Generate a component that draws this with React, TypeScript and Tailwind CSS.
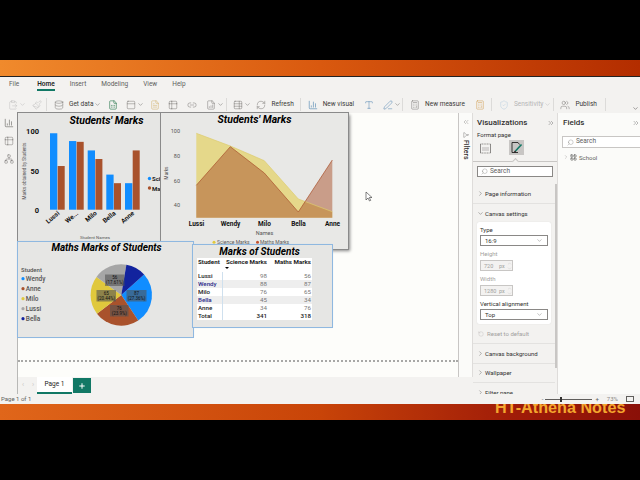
import * as React from "react";
import {
  BarChart3,
  Calculator,
  ChevronDown,
  ChevronRight,
  ChevronsLeft,
  ChevronsRight,
  ChevronUp,
  ClipboardPaste,
  Database,
  FileBarChart,
  FileSpreadsheet,
  FileText,
  Filter,
  LayoutGrid,
  Link2,
  Network,
  Paintbrush,
  PanelTop,
  PenLine,
  Plus,
  RefreshCw,
  RotateCcw,
  Search,
  ShieldCheck,
  Table2,
  TableProperties,
  Type,
  Users,
} from "lucide-react";

const sci = "#118dff";
const math = "#a9522c";

const barData = [
  { x: 50, s: 98, m: 56 },
  { x: 69, s: 88, m: 87 },
  { x: 87.7, s: 76, m: 65 },
  { x: 106.3, s: 45, m: 34 },
  { x: 125, s: 34, m: 76 },
];

const pieSlices = [
  { v: 87, c: "#118dff" },
  { v: 76, c: "#a9522c" },
  { v: 65, c: "#e0c83c" },
  { v: 56, c: "#a6a6a6" },
  { v: 34, c: "#12239e" },
];

const pieLegend = [
  { name: "Wendy", c: "#118dff" },
  { name: "Anne", c: "#a9522c" },
  { name: "Milo", c: "#e0c83c" },
  { name: "Lussi", c: "#a6a6a6" },
  { name: "Bella", c: "#12239e" },
];

const rows = [
  ["Lussi", "98", "56"],
  ["Wendy", "88", "87"],
  ["Milo", "76", "65"],
  ["Bella", "45", "34"],
  ["Anne", "34", "76"],
];

function piePaths() {
  const cx = 121.3;
  const cy = 295;
  const r = 30.7;
  let a = 48;
  return pieSlices.map((s) => {
    const sweep = (s.v / 318) * 360;
    const p = (deg: number) => {
      const t = ((deg - 90) * Math.PI) / 180;
      return `${cx + r * Math.cos(t)} ${cy + r * Math.sin(t)}`;
    };
    const d = `M${cx} ${cy}L${p(a)}A${r} ${r} 0 ${sweep > 180 ? 1 : 0} 1 ${p(a + sweep)}Z`;
    a += sweep;
    return <path key={s.c} d={d} fill={s.c} />;
  });
}

function Tool({ ml, children, chev, text, dim }: { ml: string; children?: React.ReactNode; chev?: boolean; text?: string; dim?: boolean }) {
  return (
    <div className={`flex items-center shrink-0 ${ml} ${dim ? "text-[#b5b5b5]" : "text-[#605e5c]"}`}>
      {children}
      {text && <span className={`ml-[5px] text-[6.5px] whitespace-nowrap ${dim ? "text-[#b5b5b5]" : "text-[#3b3a39]"}`}>{text}</span>}
      {chev && <ChevronDown className="w-[7px] h-[7px] ml-[1px]" strokeWidth={1.5} />}
    </div>
  );
}

const icon = "w-[10px] h-[10px]";

function Ribbon() {
  return (
    <div className="h-[36px] shrink-0 bg-[#f3f2f0] relative">
      <div className="h-[20px] pb-[4px] flex items-center text-[6.5px] text-[#605e5c]">
        <span className="ml-[9px]">File</span>
        <span className="ml-[18px] font-semibold text-[#252423] relative">
          Home
          <span className="absolute left-0 right-0 top-[9px] h-[1.5px] bg-[#117865]" />
        </span>
        <span className="ml-[15px]">Insert</span>
        <span className="ml-[15px]">Modeling</span>
        <span className="ml-[15px]">View</span>
        <span className="ml-[15px]">Help</span>
      </div>
      <div className="h-[16px] pb-[1px] flex items-center overflow-hidden">
        <Tool ml="ml-[8px]" chev dim><ClipboardPaste className={icon} strokeWidth={1} /></Tool>
        <Tool ml="ml-[6px]" dim><Paintbrush className={icon} strokeWidth={1} /></Tool>
        <div className="w-px h-[13px] bg-[#dcdbd9] ml-[4px]" />
        <Tool ml="ml-[7px]" text="Get data" chev><Database className={icon} strokeWidth={1} /></Tool>
        <Tool ml="ml-[7px]"><FileSpreadsheet className={`${icon} text-[#1e7145]`} strokeWidth={1.4} /></Tool>
        <Tool ml="ml-[8px]" chev><PanelTop className={icon} strokeWidth={1} /></Tool>
        <Tool ml="ml-[6px]"><FileText className={`${icon} text-[#c9a14a]`} strokeWidth={1} /></Tool>
        <Tool ml="ml-[8px]"><Table2 className={icon} strokeWidth={1} /></Tool>
        <Tool ml="ml-[9px]"><Link2 className={icon} strokeWidth={1} /></Tool>
        <Tool ml="ml-[9px]" chev><FileBarChart className={icon} strokeWidth={1} /></Tool>
        <div className="w-px h-[13px] bg-[#dcdbd9] ml-[2px]" />
        <Tool ml="ml-[6px]" chev><TableProperties className={icon} strokeWidth={1} /></Tool>
        <Tool ml="ml-[5px]" text="Refresh"><RefreshCw className={icon} strokeWidth={1} /></Tool>
        <div className="w-px h-[13px] bg-[#dcdbd9] ml-[6px]" />
        <Tool ml="ml-[7px]" text="New visual"><BarChart3 className={`${icon} text-[#2b6ca3]`} strokeWidth={1.2} /></Tool>
        <Tool ml="ml-[10px]"><Type className={`${icon} text-[#2b6ca3]`} strokeWidth={1} /></Tool>
        <Tool ml="ml-[9px]" chev><PenLine className={`${icon} text-[#2b6ca3]`} strokeWidth={1} /></Tool>
        <div className="w-px h-[13px] bg-[#dcdbd9] ml-[1px]" />
        <Tool ml="ml-[7px]" text="New measure"><Calculator className={icon} strokeWidth={1} /></Tool>
        <Tool ml="ml-[10px]"><Calculator className={`${icon} text-[#c98a2c]`} strokeWidth={1} /></Tool>
        <div className="w-px h-[13px] bg-[#dcdbd9] ml-[6px]" />
        <Tool ml="ml-[7px]" text="Sensitivity" chev dim><ShieldCheck className={`${icon} text-[#a9c6dc]`} strokeWidth={1} /></Tool>
        <div className="w-px h-[13px] bg-[#dcdbd9] ml-[2px]" />
        <Tool ml="ml-[6px]" text="Publish"><Users className={icon} strokeWidth={1} /></Tool>
        <div className="w-px h-[13px] bg-[#dcdbd9] ml-[8px]" />
      </div>
      <ChevronDown className="absolute right-[1px] bottom-[1px] w-[7px] h-[7px] text-[#323130]" strokeWidth={1.5} />
    </div>
  );
}

function BarsCard() {
  const y = (v: number) => 209.7 - v * 0.78;
  return (
    <div className="absolute left-0 top-0 w-[143px] h-[129px] bg-[#e6e6e4] ring-1 ring-[#8a8a8a] shadow-[1px_1px_2px_#999]">
      <svg className="absolute inset-0 font-['Roboto']" width="143" height="129" viewBox="18 113 143 129">
        <text x="106.5" y="123.5" textAnchor="middle" fontSize="10.5" fontWeight="700" fontStyle="italic" fill="#000">Students' Marks</text>
        <text transform="translate(25.5 171) rotate(-90)" textAnchor="middle" fontSize="4.6" fill="#555">Marks obtained by Students</text>
        {[["100", 134], ["50", 173.5], ["0", 212.5]].map(([t, ty]) => (
          <text key={t} x="39" y={ty} textAnchor="end" fontSize="7.5" fontWeight="700" fill="#111">{t}</text>
        ))}
        {barData.map((b) => (
          <g key={b.x}>
            <rect x={b.x} y={y(b.s)} width="7.3" height={b.s * 0.78} fill={sci} />
            <rect x={b.x + 7.7} y={y(b.m)} width="7" height={b.m * 0.78} fill={math} />
          </g>
        ))}
        {["Lussi", "We...", "Milo", "Bella", "Anne"].map((t, i) => (
          <text key={t} transform={`translate(${60 + i * 18.7} 214) rotate(-40)`} textAnchor="end" fontSize="6.5" fontWeight="700" fill="#111">{t}</text>
        ))}
        <text x="95" y="239" textAnchor="middle" fontSize="4.4" fill="#555">Student Names</text>
        <circle cx="149.5" cy="178.5" r="1.7" fill={sci} />
        <text x="152" y="181" fontSize="6" fontWeight="700" fill="#222">Sci</text>
        <circle cx="149.5" cy="188" r="1.7" fill={math} />
        <text x="152" y="190.5" fontSize="6" fontWeight="700" fill="#222">Ma</text>
      </svg>
    </div>
  );
}

function AreaCard() {
  const xs = [196.3, 230.3, 264.3, 298.3, 332.3];
  const s = [133.3, 146, 160.7, 199, 211.7];
  const m = [185.3, 146.7, 173, 212, 160];
  const area = (ys: number[]) => `M196.3 217.7${ys.map((v, i) => `L${xs[i]} ${v}`).join("")}L332.3 217.7Z`;
  const line = (ys: number[]) => ys.map((v, i) => `${i ? "L" : "M"}${xs[i]} ${v}`).join("");
  return (
    <div className="absolute left-[143px] top-0 w-[187px] h-[136px] bg-[#e8e8e6] ring-1 ring-[#8a8a8a] shadow-[2px_2px_3px_#888]">
      <svg className="absolute inset-0 font-['Roboto']" width="187" height="136" viewBox="161 113 187 136">
        <text x="254.5" y="123" textAnchor="middle" fontSize="10.5" fontWeight="700" fontStyle="italic" fill="#000">Students' Marks</text>
        <text transform="translate(168 173) rotate(-90)" textAnchor="middle" fontSize="4.6" fill="#555">Marks</text>
        {[["100", 133], ["80", 158], ["60", 182.5], ["40", 207]].map(([t, ty]) => (
          <text key={t} x="180" y={ty} textAnchor="end" fontSize="5.5" fill="#555">{t}</text>
        ))}
        <path d={area(s)} fill="#e5d88a" />
        <path d={area(m)} fill="#a9522c" fillOpacity="0.5" />
        <path d={line(s)} fill="none" stroke="#dccb6e" strokeWidth="0.7" />
        <path d={line(m)} fill="none" stroke="#a9522c" strokeWidth="0.7" />
        {["Lussi", "Wendy", "Milo", "Bella", "Anne"].map((t, i) => (
          <text key={t} x={196.5 + i * 34} y="226" textAnchor="middle" fontSize="6.5" fontWeight="700" fill="#111">{t}</text>
        ))}
        <text x="264.5" y="235" textAnchor="middle" fontSize="5.5" fill="#555">Names</text>
        <circle cx="214" cy="242.3" r="1.5" fill="#e0c83c" />
        <text x="217" y="244" fontSize="5" fill="#555">Science Marks</text>
        <circle cx="257.5" cy="242.3" r="1.5" fill="#c4502c" />
        <text x="260" y="244" fontSize="5" fill="#555">Maths Marks</text>
      </svg>
    </div>
  );
}

function PieCard() {
  const boxes = [
    { x: 105, y: 274.5, w: 19.5, a: "56", b: "(17.61%)" },
    { x: 96.5, y: 290, w: 19.5, a: "65", b: "(20.44%)" },
    { x: 110, y: 305, w: 18.5, a: "76", b: "(23.9%)" },
    { x: 126.5, y: 290, w: 20, a: "87", b: "(27.36%)" },
  ];
  return (
    <div className="absolute left-0 top-[129px] w-[175px] h-[95px] bg-[#e6e6e4] ring-1 ring-[#8fb8e0] shadow-[0_0_2px_#bcd6ee]">
      <svg className="absolute inset-0 font-['Roboto']" width="175" height="95" viewBox="18 242 175 95">
        <text x="106.5" y="251" textAnchor="middle" fontSize="10" fontWeight="700" fontStyle="italic" fill="#000">Maths Marks of Students</text>
        <text x="21" y="272" fontSize="6" fontWeight="500" fill="#555">Student</text>
        {pieLegend.map((l, i) => (
          <g key={l.name}>
            <circle cx="23" cy={278.7 + i * 10} r="1.6" fill={l.c} />
            <text x="25.8" y={281 + i * 10} fontSize="6.5" fontWeight="500" fill="#555">{l.name}</text>
          </g>
        ))}
        {piePaths()}
        {boxes.map((b) => (
          <g key={b.a}>
            <rect x={b.x} y={b.y} width={b.w} height="11.5" fill="#555" fillOpacity="0.6" />
            <text x={b.x + b.w / 2} y={b.y + 4.7} textAnchor="middle" fontSize="4.5" fill="#111">{b.a}</text>
            <text x={b.x + b.w / 2} y={b.y + 9.7} textAnchor="middle" fontSize="4.5" fill="#111">{b.b}</text>
          </g>
        ))}
      </svg>
    </div>
  );
}

function TableCard() {
  return (
    <div className="absolute left-[175px] top-[132px] w-[139px] h-[82px] bg-[#e6e6e4] ring-1 ring-[#8fb8e0] shadow-[0_0_2px_#bcd6ee] flex flex-col items-start font-['Roboto']">
      <div className="w-full pr-[6px] text-center text-[10px] leading-[13px] font-bold italic text-black">Marks of Students</div>
      <table className="ml-[4px] w-[115px] table-fixed bg-white text-[6.2px] text-[#222] leading-[8px]">
        <thead>
          <tr className="h-[14px] font-bold align-top">
            <th className="w-[25px] text-left pl-[1px]">Student</th>
            <th className="w-[46px] text-right pr-[1px] font-bold relative">
              Science Marks
              <span className="absolute left-[3px] top-[9px] w-0 h-0 border-x-[2px] border-x-transparent border-t-[2px] border-t-black" />
            </th>
            <th className="text-right pr-[1px] font-bold">Maths Marks</th>
          </tr>
        </thead>
        <tbody>
          {rows.map((r, i) => (
            <tr key={r[0]} className={`h-[8px] ${i % 2 ? "bg-[#eeeeee] text-[#2b2b8a]" : "bg-white text-[#222]"}`}>
              <td className="pl-[1px] font-medium border-r border-r-[#cfe0ee]">{r[0]}</td>
              <td className="text-right pr-[1px] text-[#777]">{r[1]}</td>
              <td className="text-right pr-[1px] text-[#777]">{r[2]}</td>
            </tr>
          ))}
          <tr className="h-[8px] font-medium">
            <td className="pl-[1px] border-r border-r-[#cfe0ee]">Total</td>
            <td className="text-right pr-[1px]">341</td>
            <td className="text-right pr-[1px]">318</td>
          </tr>
        </tbody>
      </table>
    </div>
  );
}

function Dropdown({ value }: { value: string }) {
  return (
    <div className="mx-[3px] h-[11px] border border-[#8a8886] bg-white flex items-center justify-between px-[4px] text-[6px] text-[#323130]">
      {value}
      <ChevronDown className="w-[7px] h-[7px]" strokeWidth={1} />
    </div>
  );
}

function Spin({ value }: { value: string }) {
  return (
    <div className="ml-[3px] w-[33px] h-[11px] border border-[#c8c6c4] bg-[#f3f2f1] flex items-center pl-[3px] text-[5.5px] text-[#a19f9d]">
      <span className="w-[15px]">{value}</span>
      <span>px</span>
      <span className="ml-auto flex flex-col">
        <ChevronUp className="w-[5px] h-[5px]" strokeWidth={1} />
        <ChevronDown className="w-[5px] h-[5px]" strokeWidth={1} />
      </span>
    </div>
  );
}

function Section({ label }: { label: string }) {
  return (
    <div className="h-[19.5px] shrink-0 border-t border-[#e3e2e0] flex items-center text-[6px] text-[#323130] pl-[4px]">
      <ChevronRight className="w-[7px] h-[7px] mr-[1px]" strokeWidth={1.2} />
      {label}
    </div>
  );
}

function VizPanel() {
  return (
    <div className="w-[85px] shrink-0 bg-[#f3f2f0] border-r border-[#dedcda] flex flex-col relative overflow-hidden">
      <div className="h-[19px] shrink-0 flex items-center justify-between pl-[4px] pr-[2px] text-[8px] font-medium text-[#323130]">
        Visualizations
        <ChevronsRight className="w-[8px] h-[8px]" strokeWidth={1} />
      </div>
      <div className="pl-[4px] shrink-0 h-[6px] text-[6px] leading-[6px] text-[#323130]">Format page</div>
      <div className="flex mt-[2px] h-[15px] shrink-0 items-center">
        <svg className="ml-[7px] w-[11px] h-[13px]" viewBox="0 0 11 13" fill="none" stroke="#605e5c" strokeWidth="0.7">
          <path d="M0.5 3h10M0.5 12h10" strokeDasharray="1 0.6" />
          <path d="M0.5 3v9M10.5 3v9" />
          <path d="M2 7h7M2 9h7" stroke="#a19f9d" />
        </svg>
        <div className="ml-[18px] w-[15px] h-[15px] bg-[#c8c6c4] flex items-center justify-center">
          <svg className="w-[13px] h-[13px]" viewBox="0 0 13 13" fill="none" stroke="#252423" strokeWidth="0.9">
            <path d="M8 1.5H2v10h6" />
            <path d="M8 1.5l1.5 2" />
            <path d="M5.5 10l6-6.5" stroke="#117865" strokeWidth="1.6" />
            <path d="M4.5 11.5l1-1.5" strokeWidth="1.4" />
          </svg>
        </div>
      </div>
      <div className="mt-[6px] h-px shrink-0 bg-[#c8c6c4] relative">
        <span className="absolute left-[40px] -top-[2px] w-[5px] h-[5px] rotate-45 bg-[#f3f2f0] border-l border-t border-[#c8c6c4]" />
      </div>
      <div className="mt-[4px] mx-[4px] h-[11px] shrink-0 bg-white border border-[#8a8886] flex items-center pl-[3px] text-[6.5px] text-[#605e5c]">
        <Search className="w-[7px] h-[7px] mr-[2px] -scale-x-100" strokeWidth={1} />
        Search
      </div>
      <div className="mt-[7px] flex-1 min-h-0 flex flex-col pr-[2.5px]">
        <div className="h-[19px] shrink-0 flex items-center text-[6px] text-[#323130] pl-[4px]">
          <ChevronRight className="w-[7px] h-[7px] mr-[1px]" strokeWidth={1.2} />
          Page information
        </div>
        <div className="h-[19px] shrink-0 border-t border-[#e3e2e0] flex items-center text-[6px] text-[#323130] pl-[4px]">
          <ChevronDown className="w-[7px] h-[7px] mr-[1px]" strokeWidth={1.2} />
          Canvas settings
        </div>
        <div className="mx-[4px] h-[102px] shrink-0 bg-white rounded-[2px] shadow-[0_0_1px_#ccc] pt-[4px] text-[6px] leading-[8px] text-[#323130]">
          <div className="ml-[3px] mb-[1px]">Type</div>
          <Dropdown value="16:9" />
          <div className="ml-[3px] mt-[4px] mb-[2px] text-[#a19f9d]">Height</div>
          <Spin value="720" />
          <div className="ml-[3px] mt-[4px] mb-[2px] text-[#a19f9d]">Width</div>
          <Spin value="1280" />
          <div className="ml-[3px] mt-[3.5px] mb-[1.5px]">Vertical alignment</div>
          <Dropdown value="Top" />
        </div>
        <div className="h-[19px] shrink-0 flex items-center text-[6px] text-[#a19f9d] pl-[5px]">
          <RotateCcw className="w-[6px] h-[6px] mr-[3px]" strokeWidth={1} />
          Reset to default
        </div>
        <Section label="Canvas background" />
        <Section label="Wallpaper" />
        <Section label="Filter pane" />
      </div>
      <div className="absolute right-0 top-[71px] w-[2.5px] h-[184px] bg-[#c8c6c4]" />
    </div>
  );
}

function FieldsPanel() {
  return (
    <div className="flex-1 min-w-0 bg-[#fbfbf9] flex flex-col overflow-hidden">
      <div className="h-[19px] shrink-0 flex items-center justify-between pl-[5px] pr-0 text-[8px] font-medium text-[#323130]">
        Fields
        <ChevronsRight className="w-[8px] h-[8px]" strokeWidth={1} />
      </div>
      <div className="ml-[4px] mt-[4px] w-[90px] h-[12px] shrink-0 bg-white border border-[#c8c6c4] flex items-center pl-[4px] text-[6.5px] text-[#605e5c]">
        <Search className="w-[7px] h-[7px] mr-[2px] -scale-x-100" strokeWidth={1} />
        Search
      </div>
      <div className="ml-[5px] mt-[3px] h-[12px] flex items-center text-[6px] text-[#605e5c]">
        <ChevronRight className="w-[6px] h-[6px] mr-[1px]" strokeWidth={1} />
        <LayoutGrid className="w-[7px] h-[7px] mr-[2px] text-[#323130]" strokeWidth={1.6} />
        School
      </div>
    </div>
  );
}

export default function App() {
  return (
    <div className="w-[640px] h-[480px] overflow-hidden bg-black flex flex-col font-['Roboto',sans-serif]">
      <div className="h-[60px] shrink-0 bg-black" />
      <div className="h-[17px] shrink-0 border-b border-[#222] bg-[linear-gradient(90deg,#f08a2c,#d9590f_50%,#b32d00)]" />
      <Ribbon />

      <div className="h-[281px] shrink-0 flex bg-[#f3f2f0]">
        <div className="w-[18px] shrink-0 flex flex-col items-center pt-[5px] gap-[8px] text-[#605e5c] border-r border-[#b8b8b6]">
          <BarChart3 className="w-[10px] h-[10px]" strokeWidth={1.4} />
          <Table2 className="w-[10px] h-[10px]" strokeWidth={1} />
          <Network className="w-[10px] h-[10px]" strokeWidth={1} />
        </div>

        <div className="w-[441px] shrink-0 flex flex-col">
          <div className="relative flex-1 bg-[#fdfdfa] border-r border-[#c8c6c4]">
            <div className="absolute left-0 right-0 top-[247px] border-t-2 border-dotted border-[#a8a8a6]" />
            <BarsCard />
            <AreaCard />
            <PieCard />
            <TableCard />
            <svg className="absolute left-[347px] top-[78px] w-[9px] h-[11px]" viewBox="0 0 9 11">
              <path d="M1 1v8l2-2 1.5 3 1.2-.6L4.3 6.5H7z" fill="#fff" stroke="#333" strokeWidth="0.6" />
            </svg>
          </div>
          <div className="h-[17px] shrink-0 flex items-center text-[#c8c6c4] text-[7px]">
            <span className="ml-[4px] w-[2px]">‹</span>
            <span className="ml-[8px] w-[2px]">›</span>
            <div className="ml-[3px] w-[35px] h-[17px] bg-white border-b-2 border-[#117865] flex items-center justify-center text-[6.5px] text-[#252423]">Page 1</div>
            <div className="ml-px w-[18px] h-[15px] bg-[#117865] flex items-center justify-center">
              <Plus className="w-[8px] h-[8px] text-white" strokeWidth={3} />
            </div>
          </div>
        </div>

        <div className="w-[14px] shrink-0 flex flex-col">
          <div className="flex-1 bg-[#fbfbf9] border-r border-[#dedcda] flex flex-col items-center text-[#323130]">
            <ChevronsLeft className="w-[8px] h-[8px] mt-[5px] text-[#605e5c]" strokeWidth={1} />
            <Filter className="w-[6px] h-[6px] mt-[6px] -rotate-90" strokeWidth={1.2} />
            <span className="mt-[2px] text-[7px] font-medium [writing-mode:vertical-rl]">Filters</span>
          </div>
          <div className="h-[17px] shrink-0" />
        </div>

        <VizPanel />
        <FieldsPanel />
      </div>

      <div className="h-[10px] shrink-0 bg-[#f3f2f0] flex items-center pl-[1px] pr-[6px] text-[6px] leading-[8px] text-[#605e5c]">
        <span className="whitespace-nowrap">Page 1 of 1</span>
        <span className="ml-auto">-</span>
        <div className="ml-[2px] w-[47px] shrink-0 h-px bg-[#605e5c] relative">
          <span className="absolute left-[15px] -top-[2px] w-[2px] h-[5px] bg-[#323130]" />
        </div>
        <span className="ml-[3px]">+</span>
        <span className="ml-[8px] text-[#8a8886]">73%</span>
        <span className="ml-[8px] w-[8px] h-[6px] shrink-0 border border-[#605e5c]" />
      </div>

      <div className="h-[16px] shrink-0 overflow-hidden relative bg-[linear-gradient(90deg,#e0661a,#c84408_50%,#a01c08_80%,#8a1008)]">
        <div className="absolute left-[495px] -top-[8px] whitespace-nowrap text-[16.2px] leading-[22px] font-bold text-[#f4a62e] font-['Liberation_Sans',sans-serif]">HT-Athena Notes</div>
      </div>
      <div className="flex-1 bg-black" />
    </div>
  );
}
